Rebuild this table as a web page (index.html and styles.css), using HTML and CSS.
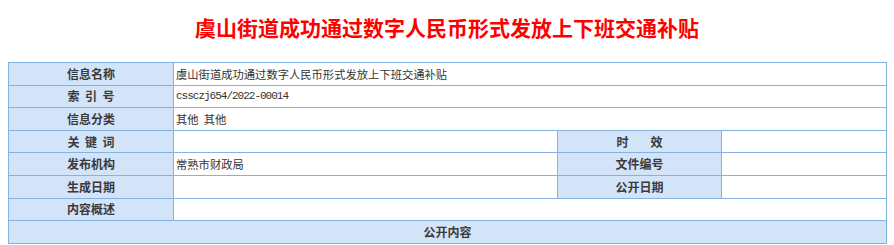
FILE: index.html
```html
<!DOCTYPE html>
<html lang="zh-CN">
<head>
<meta charset="utf-8">
<title>信息公开</title>
<link rel="stylesheet" href="styles.css">
</head>
<body>
<div class="page">
  <h1 class="title">虞山街道成功通过数字人民币形式发放上下班交通补贴</h1>
  <table class="info">
    <colgroup>
      <col class="c1"><col class="c2"><col class="c3"><col class="c4">
    </colgroup>
    <tr><th>信息名称</th><td colspan="3">虞山街道成功通过数字人民币形式发放上下班交通补贴</td></tr>
    <tr><th>索&nbsp;&nbsp;引&nbsp;&nbsp;号</th><td colspan="3" class="mono">cssczj654/2022-00014</td></tr>
    <tr><th>信息分类</th><td colspan="3">其他&nbsp; 其他</td></tr>
    <tr><th>关&nbsp;&nbsp;键&nbsp;&nbsp;词</th><td></td><th>时&nbsp;&nbsp;&nbsp;&nbsp;&nbsp;&nbsp;&nbsp;&nbsp;效</th><td></td></tr>
    <tr><th>发布机构</th><td>常熟市财政局</td><th>文件编号</th><td></td></tr>
    <tr><th>生成日期</th><td></td><th>公开日期</th><td></td></tr>
    <tr><th>内容概述</th><td colspan="3"></td></tr>
    <tr><th colspan="4">公开内容</th></tr>
  </table>
</div>
</body>
</html>
```

FILE: styles.css
```css
html, body {
  margin: 0;
  padding: 0;
  background: #ffffff;
}

.page {
  padding: 0 8px;
}

.title {
  margin: 0;
  padding-top: 13px;
  height: 62px;
  box-sizing: border-box;
  text-align: center;
  font-family: "Noto Sans CJK SC", "Noto Sans", sans-serif;
  font-weight: bold;
  font-size: 21px;
  line-height: 28px;
  color: #ff0000;
}

.info {
  width: 878px;
  border-collapse: collapse;
  table-layout: fixed;
  font-family: "Noto Sans CJK SC", "Noto Sans", sans-serif;
}

.c1 { width: 165px; }
.c2 { width: 384px; }
.c3 { width: 164px; }
.c4 { width: 165px; }

.info tr {
  height: 22.6px;
}

.info th,
.info td {
  border: 1px solid #83b2e3;
  padding: 0 2px;
  line-height: 16px;
  vertical-align: middle;
}

.info th {
  background: #d3e3f8;
  color: #3a3a3a;
  font-size: 12px;
  font-weight: bold;
  text-align: center;
}

.info td {
  background: #ffffff;
  color: #333333;
  font-size: 11.3px;
  text-align: left;
}

.info td.mono {
  font-family: "Liberation Mono", "DejaVu Sans Mono", monospace;
  font-size: 11px;
  letter-spacing: -1px;
}
```
